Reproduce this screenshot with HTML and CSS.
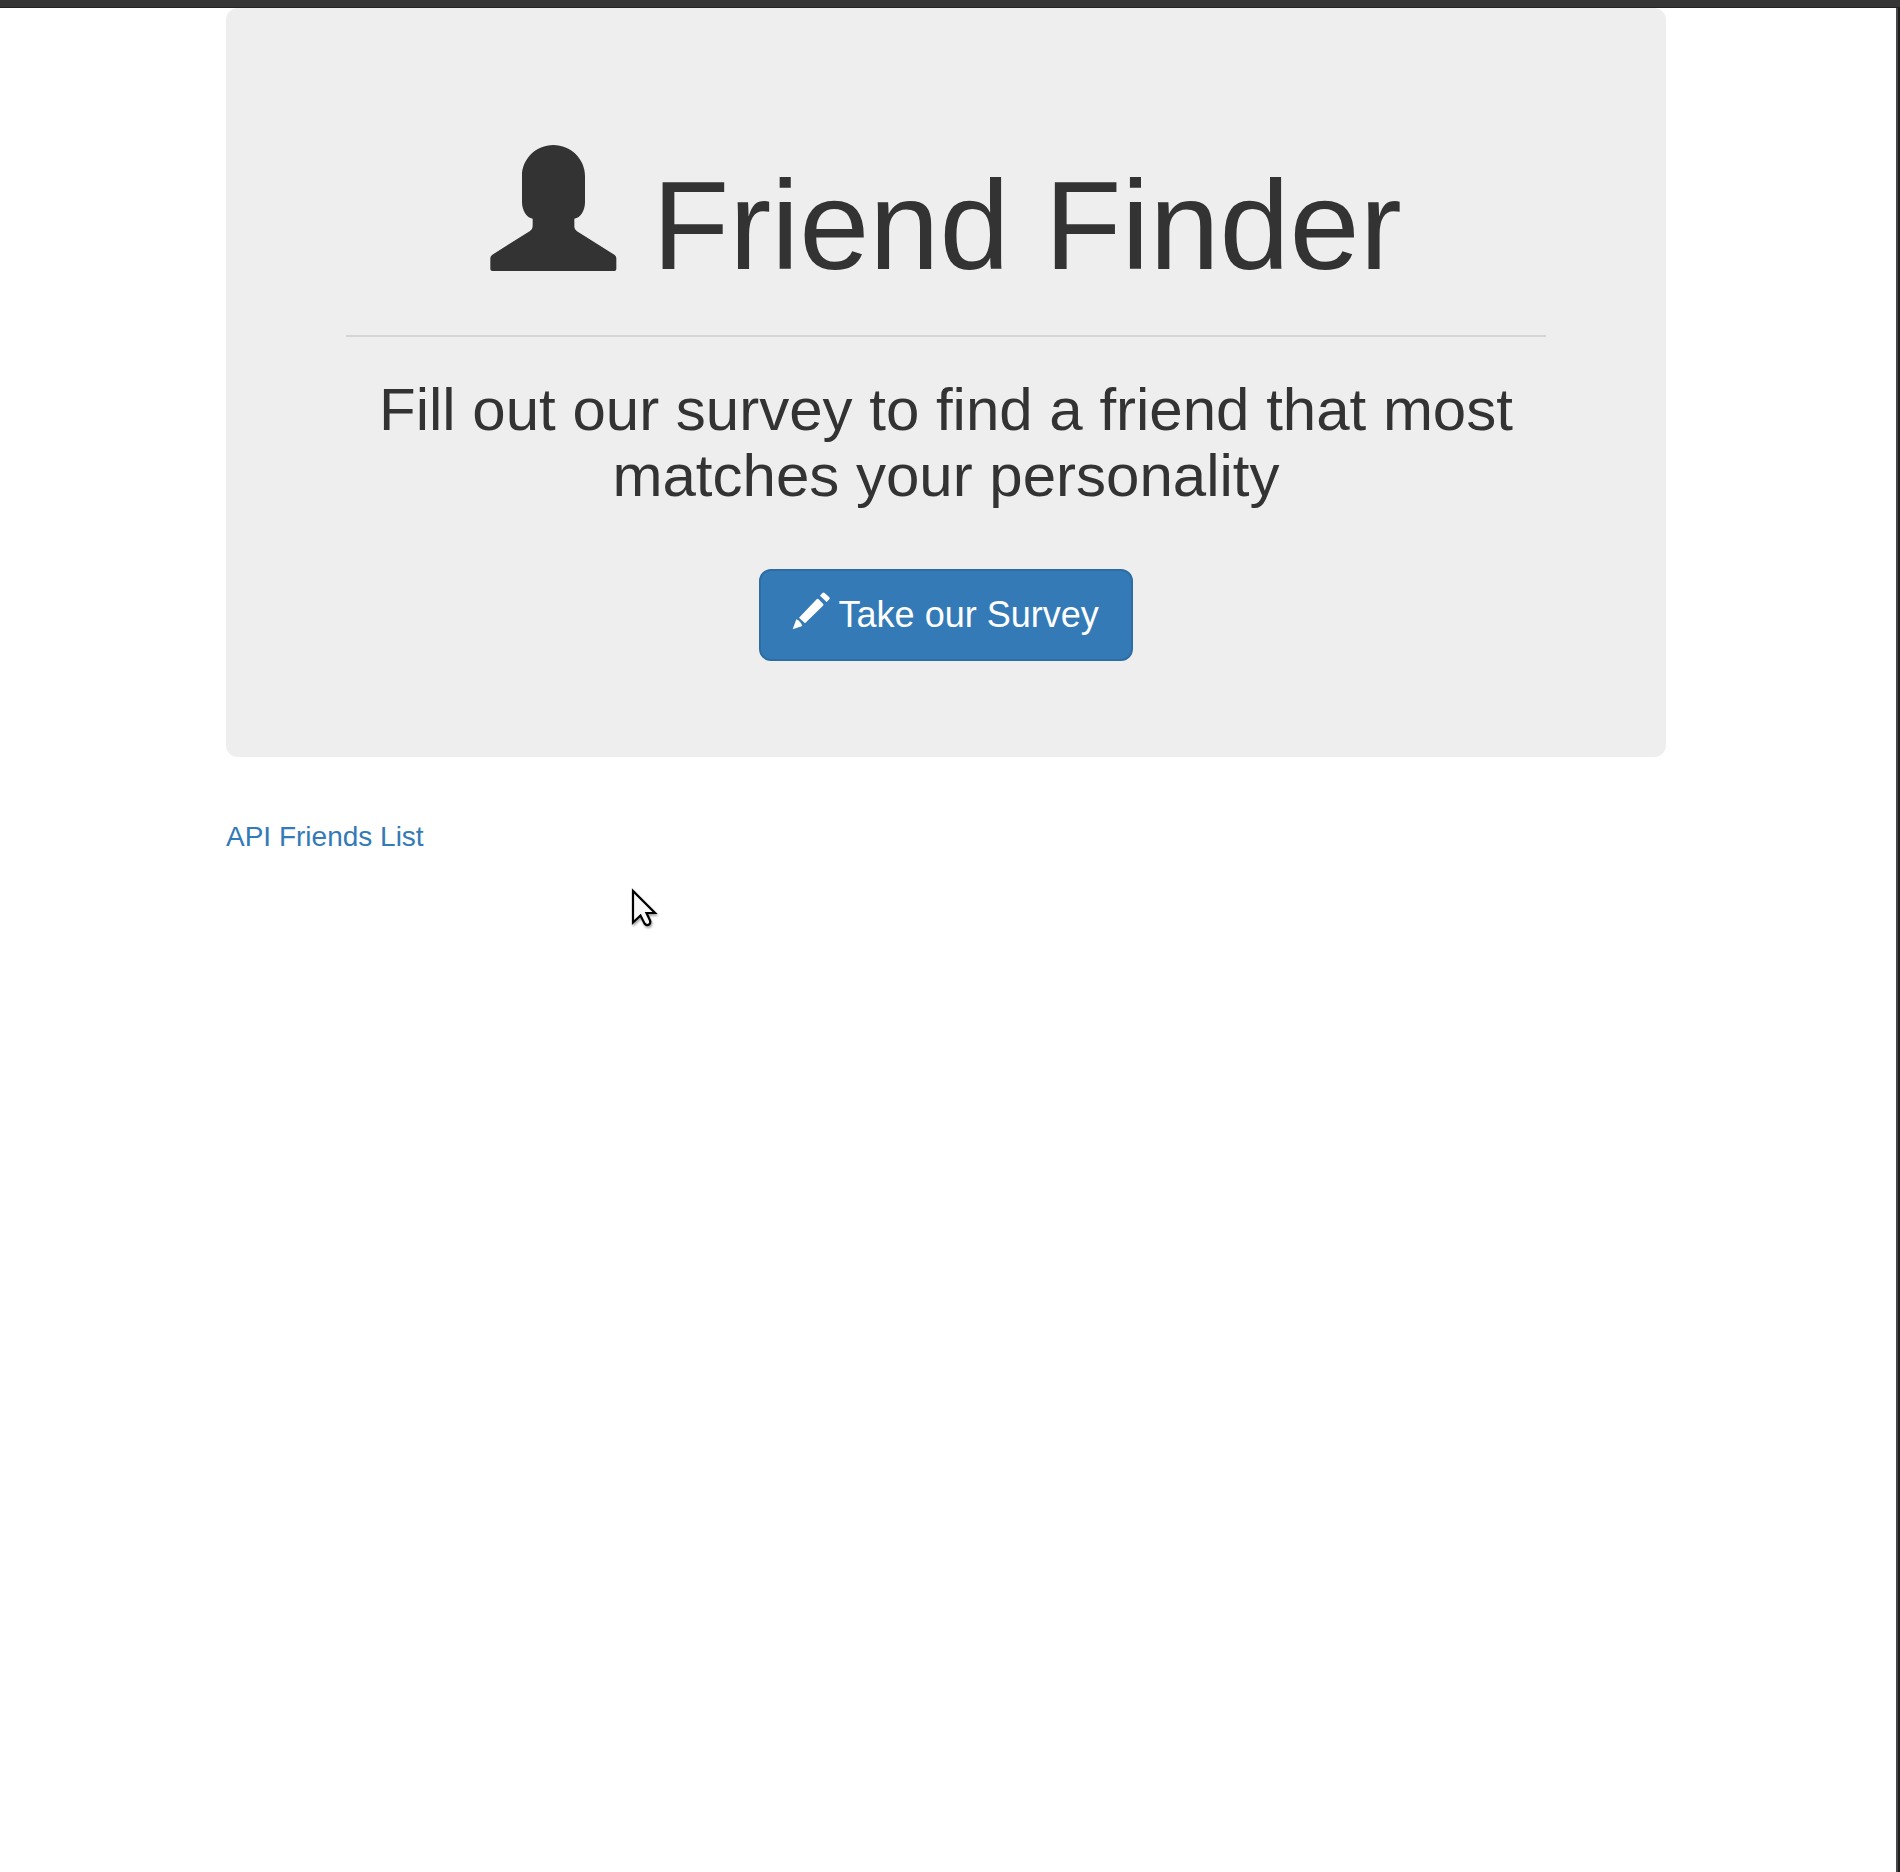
FILE: index.html
```html
<!DOCTYPE html>
<html lang="en">
<head>
<meta charset="utf-8">
<title>Friend Finder</title>
<link rel="stylesheet" href="styles.css">
</head>
<body>
<div class="window">
  <div class="window-bar"></div>
  <div class="window-body">
    <main class="page">
      <section class="jumbotron">
        <h1 class="title"><svg class="user-icon" viewBox="61 44 378 378" aria-hidden="true"><path d="M251 44C303 44 346 86 346 136V216C346 239 333 264 314 265V289Q314 298 322 303L434 373Q440 377 440 384V416Q440 422 434 422H68Q62 422 62 416V384Q62 377 68 373L181 302Q189 297 189 288V265C171 264 157 239 157 216V136C157 86 199 44 251 44Z"/></svg> Friend Finder</h1>
        <hr class="rule">
        <h2 class="lead">Fill out our survey to find a friend that most matches your personality</h2>
        <a class="button"><svg class="pencil-icon" viewBox="129 99 108 108" aria-hidden="true"><path d="M128 208L139 178C147 181 155 190 157 198ZM147 173L200 118Q203 115 206 118L219 131Q222 134 219 137L165 190ZM210 107L217 99Q220 96 224 99L238 112Q241 115 238 118L230 126Z"/></svg> Take our Survey</a>
      </section>
      <a class="api-link">API Friends List</a>
    </main>
    <div class="window-edge"></div>
  </div>
</div>
<svg class="cursor" viewBox="0 0 32 44" aria-hidden="true"><path d="M3 4V35.500L10.500 28.500L14.500 36.500Q16.500 39 19 37.500Q21 36 20 33.500L16.500 26H25Z" /></svg>
</body>
</html>
```
FILE: styles.css
```css
* { box-sizing: border-box; }
body {
  margin: 0;
  background: #fff;
  color: #333;
  font: 28px/40px "Liberation Sans", Arial, sans-serif;
}
.window { display: flex; flex-direction: column; height: 1872px; overflow: hidden; }
.window-bar { height: 8px; flex: none; background: #373636; border-bottom: 1px solid #242222; }
.window-body { display: flex; flex: 1; }
.page { flex: 1; padding-left: 226px; }
.window-edge {
  width: 4px;
  background: #1f1f1f;
  border-left: 2px solid #474747;
}
.jumbotron {
  display: flex;
  flex-direction: column;
  align-items: center;
  width: 1440px;
  height: 749px;
  padding: 137px 120px 96px;
  border-radius: 12px;
  background: #eee;
  text-align: center;
}
.title { margin: 0; height: 150px; font-size: 126px; font-weight: 500; line-height: 138.6px; white-space: nowrap; }
.user-icon { width: 126px; height: 126px; margin-right: 1px; vertical-align: -2px; fill: #333; overflow: visible; }
.rule { width: 100%; height: 2px; margin: 40px 0; border: 0; background: #d5d5d5; }
.lead { margin: 0 0 60px; font-size: 60px; font-weight: 500; line-height: 66px; }
.button {
  height: 92px;
  padding: 20px 32px;
  border: 2px solid #2e6da4;
  border-radius: 12px;
  background: #337ab7;
  color: #fff;
  font-size: 36px;
  line-height: 48px;
  white-space: nowrap;
}
.pencil-icon { width: 36px; height: 36px; vertical-align: -2px; fill: #fff; overflow: visible; }
.api-link { display: block; margin-top: 60px; color: #337ab7; }
/* The pointer floats over the page */
.cursor {
  position: absolute;
  left: 630px;
  top: 887px;
  width: 32px;
  height: 44px;
  fill: #f8f8f8;
  stroke: #000;
  stroke-width: 2.2;
  filter: drop-shadow(1px 2px 1px rgba(0, 0, 0, .35));
}
```
